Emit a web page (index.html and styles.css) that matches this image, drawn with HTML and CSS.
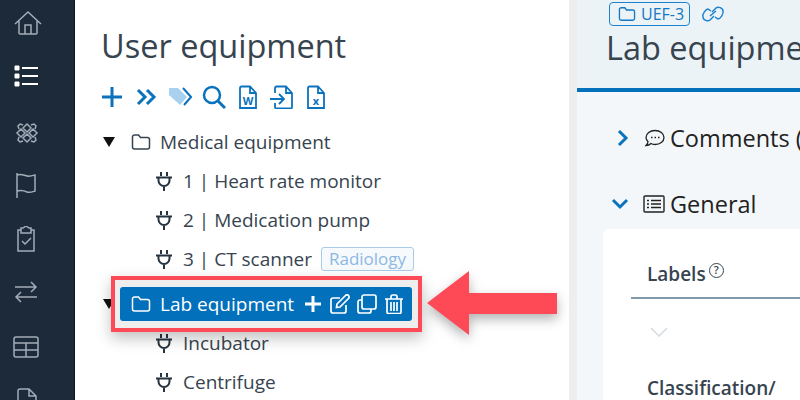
FILE: index.html
```html
<!DOCTYPE html>
<html lang="en">
<head>
    <meta charset="UTF-8">
    <title>User equipment</title>
    <link rel="stylesheet" href="styles.css">
</head>
<body>
    <svg class="defs" width="0" height="0">
        <symbol id="folder" viewBox="0 0 20 18"><path d="M1.5 4a2 2 0 0 1 2-2h4l2 2.5h7a2 2 0 0 1 2 2V14a2 2 0 0 1-2 2h-13a2 2 0 0 1-2-2z" fill="none" stroke="currentColor" stroke-width="1.5"/></symbol>
        <symbol id="plug" viewBox="0 0 16 20"><path d="M5 1v4M11 1v4M0 6.5h16M2.500 6.500v3a5.500 5.500 0 0 0 11 0v-3M8 15v5" fill="none" stroke="currentColor" stroke-width="2"/></symbol>
    </svg>

    <nav class="sidebar">
        <svg class="nav-icon" viewBox="0 0 28 24"><path d="M1 13 14 1l13 12M5 10v12a1 1 0 0 0 1 1h16a1 1 0 0 0 1-1V10M11 23v-9h6v9"/></svg>
        <svg class="nav-icon nav-active" viewBox="0 0 28 24"><path d="M8 3h16M8 11h16M8 19h16" stroke-width="2"/><path d="M1 1h4v4H1zM1 9h4v4H1zM1 17h4v4H1z" fill="#fff" stroke-width="1"/></svg>
        <svg class="nav-icon" viewBox="1 -2 28 24"><path d="M14 3l4 4-4 4-4-4zM14 13l4 4-4 4-4-4zM8 8l4 4-4 4-4-4zM20 8l4 4-4 4-4-4zM10 4 7 3 5 5l1 3M18 4l3-1 2 2-1 3M10 20l-3 1-2-2 1-3M18 20l3 1 2-2-1-3"/></svg>
        <svg class="nav-icon" viewBox="2 0 28 26"><path d="M5 1v25M5 3c6-2 8 2 13 1 2 0 4-1 5-1v16c-3 1-5 2-8 1-4-2-6-2-10-1"/></svg>
        <svg class="nav-icon" viewBox="2 0 28 26"><path d="M9 4H6v21h16V4h-3M9 2h2l3-2 3 2h2v5H9zM10 15l3 3 6-6"/></svg>
        <svg class="nav-icon" viewBox="2 1 28 24"><path d="M3 7h21M19 2l5 5-5 5M25 17H4M9 12l-5 5 5 5"/></svg>
        <svg class="nav-icon nav-table" viewBox="0 0 28 26"><path d="M3 3h20a2 2 0 0 1 2 2v16a2 2 0 0 1-2 2H3a2 2 0 0 1-2-2V5a2 2 0 0 1 2-2zM1 9h24M1 16h24M13 9v14"/></svg>
        <svg class="nav-icon nav-table" viewBox="0 0 28 26"><path d="M5 25V3a2 2 0 0 1 2-2h9l7 7v17M16 1v7h7"/></svg>
    </nav>

    <main class="tree-panel">
        <h1>User equipment</h1>
        <div class="toolbar">
            <svg class="tool" viewBox="0 0 24 24"><path d="M12 2v20M2 12h20" stroke-width="3"/></svg>
            <svg class="tool" viewBox="0 0 24 24"><path d="M4 5l7 7-7 7M13 5l7 7-7 7" stroke-width="3"/></svg>
            <svg class="tool" viewBox="0 0 24 24"><path d="M1 3h9l9 9-7 8L1 10z" fill="#a9d0ee" stroke="none"/><path d="M15 3l8 9-7 8" stroke-width="2"/></svg>
            <svg class="tool" viewBox="0 0 24 24"><circle cx="10" cy="10" r="8" stroke-width="2.5"/><path d="M16 16l7 7" stroke-width="3"/></svg>
            <svg class="tool" viewBox="0 0 24 24"><path d="M4 23V3a1.5 1.5 0 0 1 1.5-1.5H14L20 8v15zM14 2v6h6"/><text x="12" y="20" class="tool-letter">W</text></svg>
            <svg class="tool" viewBox="0 0 24 24"><path d="M5 8V3a1.5 1.5 0 0 1 1.5-1.5H16L22 8v14a1.5 1.5 0 0 1-1.500 1.500H6.500A1.500 1.500 0 0 1 5 22v-4M16 2v6h6M0 14h14M9 9l5 5-5 5"/></svg>
            <svg class="tool" viewBox="0 0 24 24"><path d="M4 23V3a1.5 1.5 0 0 1 1.5-1.5H14L20 8v15zM14 2v6h6"/><text x="12" y="20" class="tool-letter">x</text></svg>
        </div>

        <ul class="tree">
            <li class="row">
                <span class="caret"></span>
                <svg class="folder"><use href="#folder"/></svg>
                <span>Medical equipment</span>
            </li>
            <li class="row child"><svg class="plug"><use href="#plug"/></svg><span>1 | Heart rate monitor</span></li>
            <li class="row child"><svg class="plug"><use href="#plug"/></svg><span>2 | Medication pump</span></li>
            <li class="row child"><svg class="plug"><use href="#plug"/></svg><span>3 | CT scanner</span><span class="badge">Radiology</span></li>
            <li class="row row-selected">
                <span class="caret"></span>
                <div class="highlight">
                    <div class="selected">
                        <svg class="folder"><use href="#folder"/></svg>
                        <span class="selected-name">Lab equipment</span>
                        <svg class="action" viewBox="0 0 20 20"><path d="M10 2v16M2 10h16" stroke-width="3"/></svg>
                        <svg class="action" viewBox="0 0 20 20"><path d="M16 11v6a2 2 0 0 1-2 2H3a2 2 0 0 1-2-2V6a2 2 0 0 1 2-2h7M7 10 15.5 1.5a1.5 1.5 0 0 1 3 3L10 13l-3.500.5z"/></svg>
                        <svg class="action" viewBox="0 0 20 20"><path d="M7 1h10a2 2 0 0 1 2 2v10a2 2 0 0 1-2 2H7a2 2 0 0 1-2-2V3a2 2 0 0 1 2-2zM5 6H3a2 2 0 0 0-2 2v9a2 2 0 0 0 2 2h9a2 2 0 0 0 2-2v-2"/></svg>
                        <svg class="action" viewBox="0 0 20 20"><path d="M1 5h18M7 5V2.500A1.500 1.500 0 0 1 8.500 1h3A1.500 1.500 0 0 1 13 2.500V5M3 5v13a1.500 1.500 0 0 0 1.500 1.500h11A1.500 1.500 0 0 0 17 18V5M7 8v9M10 8v9M13 8v9"/></svg>
                    </div>
                </div>
            </li>
            <li class="row child"><svg class="plug"><use href="#plug"/></svg><span>Incubator</span></li>
            <li class="row child"><svg class="plug"><use href="#plug"/></svg><span>Centrifuge</span></li>
        </ul>

        <svg class="arrow" width="140" height="74" viewBox="0 0 140 74"><polygon points="2,37 44,5 44,27 132,27 132,48 44,48 44,69" fill="#fd4a56"/></svg>
    </main>

    <section class="detail">
        <header class="detail-header">
            <div class="detail-tags">
                <span class="uef-tag"><svg class="uef-folder"><use href="#folder"/></svg>UEF-3</span>
                <svg class="link-icon" viewBox="0 0 24 20"><path d="M10 7 7 5c-2 0-6 5-5 8 0 3 5 5 7 3l4-4M14 13l3 2c2 0 6-5 5-8 0-3-5-5-7-3l-4 4M9 12l6-5" fill="none" stroke="currentColor" stroke-width="1.5"/></svg>
            </div>
            <h2>Lab equipment</h2>
        </header>
        <div class="detail-body">
            <div class="section-title section-closed">
                <svg class="chevron" viewBox="0 0 12 18"><path d="M2 2l7 7-7 7"/></svg>
                <svg class="section-icon" viewBox="0 0 20 18"><path d="M10 1.500c5 0 9 3 9 7s-4 7-9 7c-1.500 0-3-.3-4-1-1 1-3 2-5 2 1-1 2-3 2-4-1-1-2-2.500-2-4 0-4 4-7 9-7z" fill="none" stroke="#222" stroke-width="1.3"/><path d="M6 8.500h1.500M9.500 8.500H11M13 8.500h1.500" stroke="#222" stroke-width="1.5"/></svg>
                <span>Comments (0)</span>
            </div>
            <div class="section-title section-open">
                <svg class="chevron-down" viewBox="0 0 18 12"><path d="M2 2l7 7 7-7"/></svg>
                <svg class="section-icon" viewBox="0 0 22 18"><path d="M2 1h18a1 1 0 0 1 1 1v14a1 1 0 0 1-1 1H2a1 1 0 0 1-1-1V2a1 1 0 0 1 1-1zM4 5.500h2M8 5.500h10M4 9h2M8 9h10M4 12.500h2M8 12.500h10" fill="none" stroke="#222" stroke-width="1.4"/></svg>
                <span>General</span>
            </div>
            <div class="card">
                <div class="field-label field-first">Labels<span class="help">?</span></div>
                <svg class="select-chevron" viewBox="0 0 18 10"><path d="M1 1l8 8 8-8"/></svg>
                <div class="field-label field-next">Classification/</div>
            </div>
        </div>
    </section>
</body>
</html>
```

FILE: styles.css
```css
* {
    box-sizing: border-box;
}
html, body {
    width: 800px;
    height: 400px;
    overflow: hidden;
}
body {
    margin: 0;
    display: flex;
    font-family: "Open Sans", sans-serif;
    color: #37444f;
    background: #fff;
}
.defs {
    position: absolute;
}
.sidebar {
    width: 75px;
    height: 400px;
    flex: none;
    background: #1c2a3a;
    border-right: 1px solid #11161c;
    display: flex;
    flex-direction: column;
    gap: 28px;
    padding: 10px 0 0 14px;
    overflow: hidden;
}
.nav-icon {
    width: 28px;
    height: 26px;
    flex: none;
    fill: none;
    stroke: #a3adb8;
    stroke-width: 1.5;
}
.nav-active {
    stroke: #fff;
}
.nav-table {
    margin-left: -1px;
}
.tree-panel {
    width: 494px;
    flex: none;
    position: relative;
    padding: 24px 0 0 26px;
}
h1 {
    margin: 0;
    font-size: 32.5px;
    font-weight: 400;
    line-height: 44px;
}
.toolbar {
    display: flex;
    gap: 10px;
    margin-top: 17px;
    margin-left: -1px;
}
.tool {
    width: 24px;
    height: 24px;
    fill: none;
    stroke: #0b72bd;
    stroke-width: 1.8;
}
.tool-letter {
    font-size: 11px;
    font-weight: 700;
    fill: #0b72bd;
    stroke: none;
    text-anchor: middle;
}
.tree {
    list-style: none;
    margin: 13px 0 0;
    padding: 0;
}
.row {
    height: 39px;
    display: flex;
    align-items: center;
    font-size: 19px;
    white-space: nowrap;
}
.child {
    padding-left: 55px;
}
.caret {
    width: 0;
    height: 0;
    margin-left: 2px;
    border-left: 6px solid transparent;
    border-right: 6px solid transparent;
    border-top: 10px solid #111;
    flex: none;
}
.folder {
    width: 20px;
    height: 18px;
    margin: 0 9px 0 16px;
    flex: none;
}
.plug {
    width: 16px;
    height: 20px;
    margin-right: 11px;
    color: #263340;
    flex: none;
}
.badge {
    margin-left: 9px;
    height: 24px;
    width: 93px;
    border: 1px solid #a8cbea;
    border-radius: 3px;
    background: #f6fafd;
    color: #8db7e2;
    font-size: 17px;
    line-height: 22px;
    text-align: center;
}
.row-selected {
    margin-top: 6px;
}
.highlight {
    position: relative;
    margin-left: -4px;
    width: 311px;
    height: 56px;
    flex: none;
    padding: 7px 6px 7px 5px;
    background: #eee;
    border: 4px solid #fd4a56;
    box-shadow: 0 6px 14px rgba(0, 0, 0, 0.25);
}
.selected {
    height: 34px;
    display: flex;
    align-items: center;
    background: #0270bb;
    border-radius: 3px;
    color: #fff;
}
.selected .folder {
    margin: 0 9px 0 11px;
}
.selected-name {
    margin-right: 9px;
}
.action {
    width: 20px;
    height: 20px;
    margin-right: 7px;
    fill: none;
    stroke: #fff;
    stroke-width: 1.7;
    flex: none;
}
.arrow {
    position: absolute;
    left: 350px;
    top: 266px;
    overflow: visible;
    filter: drop-shadow(0 5px 6px rgba(0, 0, 0, 0.3));
}
.detail {
    flex: 1;
    min-width: 0;
    border-left: 8px solid #eee;
    background: #f4f7f9;
    overflow: hidden;
}
.detail-header {
    height: 92px;
    padding: 2px 0 0 29px;
    background: #ecf3f7;
    border-bottom: 4px solid #0270bb;
}
.detail-tags {
    display: flex;
    align-items: center;
    gap: 11px;
    margin-left: 3px;
}
.uef-tag {
    height: 24px;
    width: 81px;
    display: flex;
    align-items: center;
    gap: 5px;
    padding-left: 8px;
    border: 1px solid #1e83cf;
    border-radius: 4px;
    color: #1278c4;
    font-size: 16px;
}
.uef-folder {
    width: 18px;
    height: 16px;
    flex: none;
}
.link-icon {
    width: 24px;
    height: 20px;
    color: #1e83cf;
}
h2 {
    margin: 0;
    font-size: 32.5px;
    font-weight: 400;
    line-height: 44px;
    white-space: nowrap;
}
.section-title {
    display: flex;
    align-items: center;
    font-size: 23.5px;
    color: #222;
    white-space: nowrap;
}
.section-closed {
    height: 34px;
    margin: 29px 0 0 40px;
}
.section-open {
    height: 34px;
    margin: 32px 0 0 34px;
}
.chevron {
    width: 12px;
    height: 18px;
    margin-right: 15px;
    fill: none;
    stroke: #0b72bd;
    stroke-width: 3;
    flex: none;
}
.chevron-down {
    width: 18px;
    height: 12px;
    margin-right: 14px;
    fill: none;
    stroke: #0b72bd;
    stroke-width: 3;
    flex: none;
}
.section-icon {
    width: 22px;
    height: 18px;
    margin-right: 4px;
    flex: none;
}
.section-open .section-icon {
    margin-right: 5px;
}
.card {
    margin: 8px 0 0 26px;
    padding: 32px 0 0 44px;
    height: 200px;
    background: #fff;
    border-radius: 6px 0 0 0;
}
.field-label {
    font-size: 19px;
    font-weight: 600;
    line-height: 26px;
    color: #37444f;
}
.help {
    display: inline-block;
    width: 15px;
    height: 15px;
    margin-left: 3px;
    border: 1.5px solid #37444f;
    border-radius: 50%;
    font-size: 11px;
    font-weight: 600;
    line-height: 12px;
    text-align: center;
    vertical-align: 7px;
}
.field-first {
    margin-left: -16px;
    padding: 0 0 10px 16px;
    border-bottom: 2px solid #7f9aaa;
}
.select-chevron {
    display: block;
    width: 18px;
    height: 10px;
    margin: 28px 0 0 3px;
    fill: none;
    stroke: #d6dbe0;
    stroke-width: 1.5;
}
.field-next {
    margin-top: 38px;
}
```
